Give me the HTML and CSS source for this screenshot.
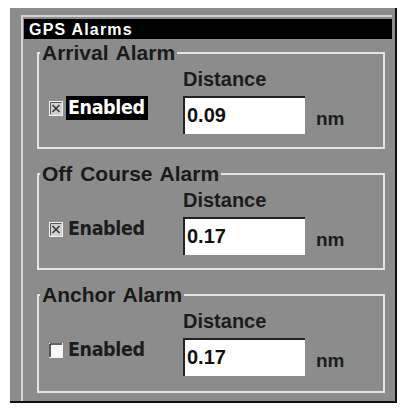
FILE: index.html
```html
<!DOCTYPE html>
<html lang="en">
<head>
    <meta charset="UTF-8">
    <title>GPS Alarms</title>
    <link rel="stylesheet" href="styles.css">
</head>
<body>
    <div class="screen">
        <div class="window">
            <div class="titlebar">GPS Alarms</div>
            <div class="groups">

                <fieldset class="group">
                    <legend>Arrival Alarm</legend>
                    <div class="row">
                        <div class="dist-label">Distance</div>
                        <div class="enable">
                            <span class="check">
                                <svg width="14" height="15" viewBox="0 0 14 15"><rect x="0.5" y="0.5" width="13" height="14" fill="#d0d0d0" stroke="#f2f2f2"/><path d="M3.5 4 L10.5 11 M10.5 4 L3.5 11" stroke="#3a3a3a" stroke-width="1.7"/><path d="M1.5 1.5 H12.5 M1.5 1.5 V13.5" stroke="#555" stroke-width="1"/></svg>
                            </span>
                            <span class="enable-text selected">Enabled</span>
                        </div>
                        <div class="field">0.09</div>
                        <div class="unit">nm</div>
                    </div>
                </fieldset>

                <fieldset class="group">
                    <legend>Off Course Alarm</legend>
                    <div class="row">
                        <div class="dist-label">Distance</div>
                        <div class="enable">
                            <span class="check">
                                <svg width="14" height="15" viewBox="0 0 14 15"><rect x="0.5" y="0.5" width="13" height="14" fill="#d0d0d0" stroke="#f2f2f2"/><path d="M3.5 4 L10.5 11 M10.5 4 L3.5 11" stroke="#3a3a3a" stroke-width="1.7"/><path d="M1.5 1.5 H12.5 M1.5 1.5 V13.5" stroke="#555" stroke-width="1"/></svg>
                            </span>
                            <span class="enable-text">Enabled</span>
                        </div>
                        <div class="field">0.17</div>
                        <div class="unit">nm</div>
                    </div>
                </fieldset>

                <fieldset class="group">
                    <legend>Anchor Alarm</legend>
                    <div class="row">
                        <div class="dist-label">Distance</div>
                        <div class="enable">
                            <span class="check">
                                <svg width="14" height="15" viewBox="0 0 14 15"><rect x="0.5" y="0.5" width="13" height="14" fill="#f8f8f8" stroke="#f2f2f2"/><path d="M1 1 H13 M1 1 V14" stroke="#333" stroke-width="1.6"/></svg>
                            </span>
                            <span class="enable-text">Enabled</span>
                        </div>
                        <div class="field">0.17</div>
                        <div class="unit">nm</div>
                    </div>
                </fieldset>

            </div>
        </div>
    </div>
</body>
</html>
```

FILE: styles.css
```css
/* Page */
body {
    margin: 0;
    background-color: #fff;
    font-family: "Liberation Sans", Arial, sans-serif;
    color: #1c1c1c;
}

/* Outer LCD panel */
.screen {
    margin: 8px 0 0 10px;
    width: 387px;
    height: 395px;
    box-sizing: border-box;
    background-color: #8c8c8c;
    border-right: 2px solid #111;
    border-bottom: 2px solid #111;
    padding: 7px 3px 0 11px;
}

.window {
    border-top: 2px solid #d4d4d4;
    border-left: 2px solid #d4d4d4;
    padding: 2px 0 0 1px;
    height: 100%;
    box-sizing: border-box;
}

.titlebar {
    background-color: #000;
    color: #fff;
    height: 20px;
    line-height: 21px;
    font-size: 16px;
    font-weight: bold;
    letter-spacing: 1.2px;
    padding-left: 5px;
}

/* Alarm groups */
.groups {
    padding: 3px 0 0 13px;
}

.group {
    margin: 0 0 14px 0;
    padding: 0;
    min-width: 0;
    width: 348px;
    box-sizing: border-box;
    border: 2px solid #e4e4e4;
}

.group:last-child {
    margin-bottom: 0;
    height: 109px;
}

.group legend {
    padding: 0 2px;
    margin-left: 1px;
    font-size: 21px;
    line-height: 22px;
    font-weight: bold;
    word-spacing: 2px;
    color: #1a1a1a;
}

.row {
    height: 83px;
    box-sizing: border-box;
    padding: 4px 0 0 11px;
    display: grid;
    grid-template-columns: 133px 122px auto;
    grid-template-rows: 22px 38px;
    row-gap: 6px;
}

.dist-label {
    grid-column: 2;
    grid-row: 1;
    font-size: 20px;
    line-height: 22px;
    font-weight: bold;
}

.enable {
    grid-column: 1;
    grid-row: 2;
    display: flex;
    align-items: center;
    align-self: start;
    height: 24px;
    margin-left: -1px;
}

.check {
    display: flex;
    width: 14px;
    height: 15px;
    margin-right: 3px;
}

.enable-text {
    font-family: "DejaVu Sans Condensed", "DejaVu Sans", sans-serif;
    font-stretch: condensed;
    font-size: 19.5px;
    letter-spacing: -0.4px;
    line-height: 24px;
    font-weight: bold;
    padding: 0 3px 0 2px;
}

.enable-text.selected {
    background-color: #000;
    color: #fff;
}

.field {
    grid-column: 2;
    grid-row: 2;
    background-color: #fff;
    border-top: 2px solid #222;
    border-left: 2px solid #222;
    box-sizing: border-box;
    height: 38px;
    padding-left: 2px;
    font-size: 20px;
    line-height: 35px;
    font-weight: bold;
    color: #111;
}

.unit {
    grid-column: 3;
    grid-row: 2;
    margin-left: 11px;
    align-self: end;
    font-size: 19px;
    line-height: 20px;
    font-weight: bold;
    margin-bottom: 5px;
}
```
